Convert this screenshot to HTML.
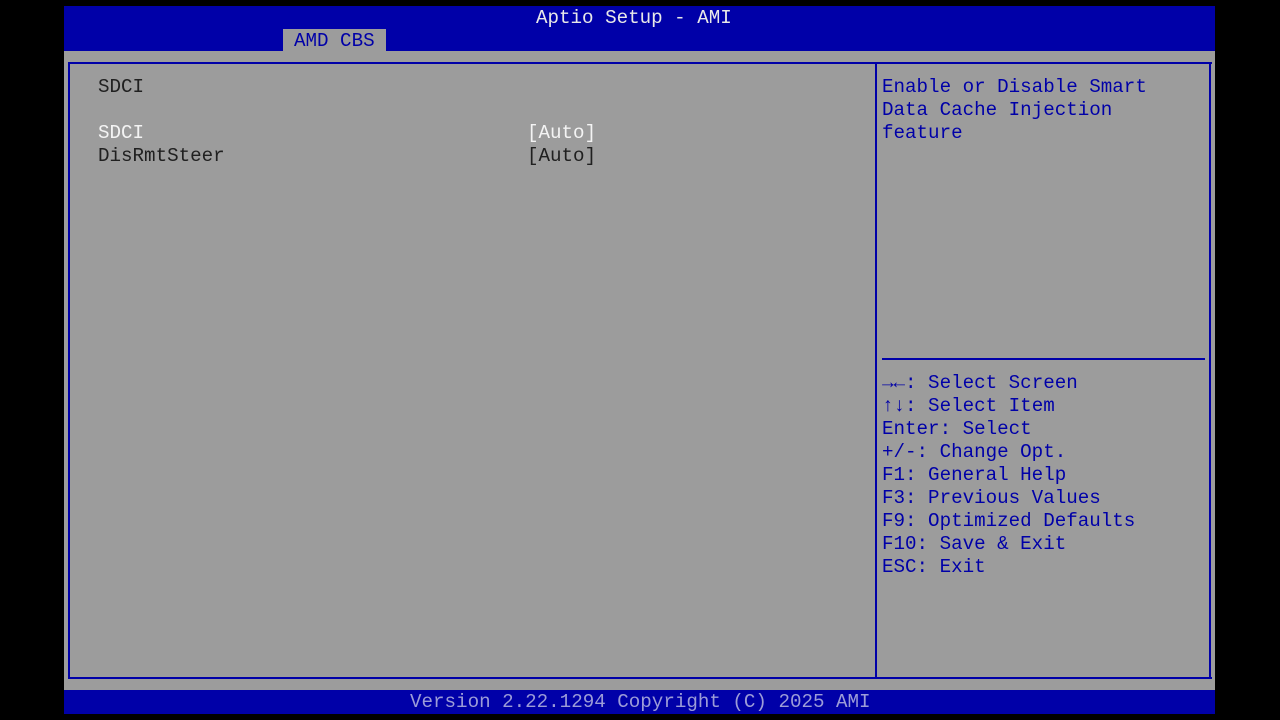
<!DOCTYPE html>
<html><head><style>
body{margin:0;background:#000;width:1280px;height:720px;position:relative;overflow:hidden;font-family:"Liberation Mono","DejaVu Sans Mono",monospace;font-size:19.2px;}
.a{position:absolute;white-space:pre;line-height:23px;}
#hdr{position:absolute;left:64px;top:6px;width:1151px;height:45px;background:#0000a8;}
#tab{position:absolute;left:283px;top:29px;width:103px;height:22px;background:#9c9c9c;}
#main{position:absolute;left:64px;top:51px;width:1151px;height:639px;background:#9c9c9c;}
#ftr{position:absolute;left:64px;top:690px;width:1151px;height:24px;background:#0000a8;}
.ln{position:absolute;background:#0000a8;}
.k{color:#0000a8}
b{font-weight:bold}
</style></head><body>
<div id="hdr"></div>
<div id="tab"></div>
<div id="main"></div>
<div id="ftr"></div>
<div class="ln" style="left:68px;top:62px;width:1144px;height:2px"></div>
<div class="ln" style="left:68px;top:677px;width:1144px;height:2px"></div>
<div class="ln" style="left:68px;top:62px;width:2px;height:617px"></div>
<div class="ln" style="left:1209px;top:62px;width:2px;height:617px"></div>
<div class="ln" style="left:875px;top:62px;width:2px;height:617px"></div>
<div class="ln" style="left:882px;top:358px;width:323px;height:2px"></div>
<div class="a" style="left:536px;top:7px;color:#e8e8e8">Aptio Setup - AMI</div>
<div class="a k" style="left:294px;top:30px">AMD CBS</div>
<div class="a" style="left:98px;top:76px;color:#202020">SDCI</div>
<div class="a" style="left:98px;top:122px;color:#f4f4f4">SDCI</div>
<div class="a" style="left:98px;top:145px;color:#202020">DisRmtSteer</div>
<div class="a" style="left:527px;top:122px;color:#f4f4f4">[Auto]</div>
<div class="a" style="left:527px;top:145px;color:#202020">[Auto]</div>
<div class="a k" style="left:882px;top:76px">Enable or Disable Smart
Data Cache Injection
feature</div>
<div class="a k" style="left:882px;top:372px"><b>→←</b>: Select Screen
<b>↑↓</b>: Select Item
Enter: Select
+/-: Change Opt.
F1: General Help
F3: Previous Values
F9: Optimized Defaults
F10: Save &amp; Exit
ESC: Exit</div>
<div class="a" style="left:410px;top:691px;color:#9c9cd8">Version 2.22.1294 Copyright (C) 2025 AMI</div>
</body></html>
